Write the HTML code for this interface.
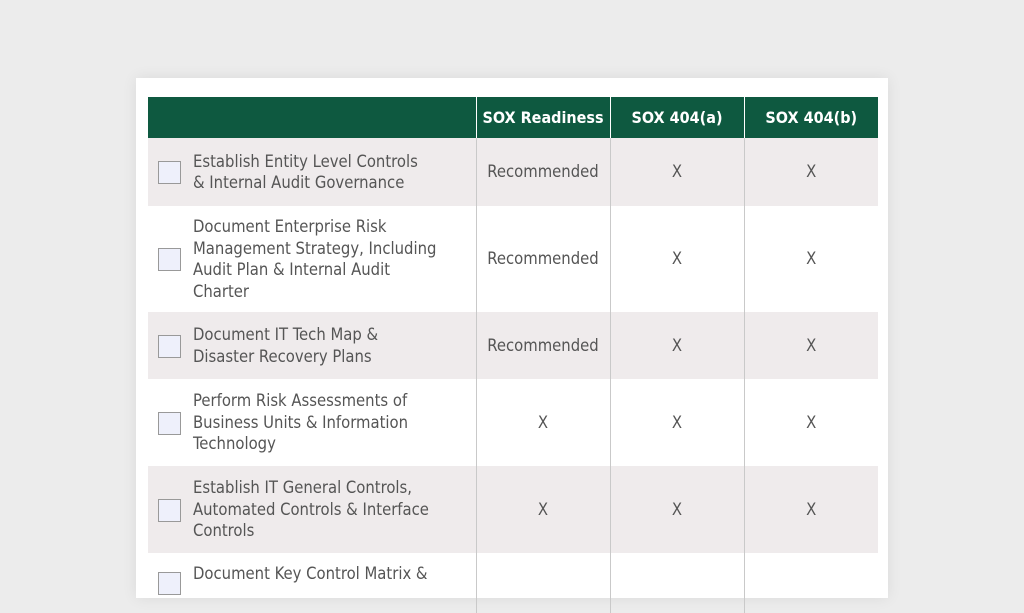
<!DOCTYPE html>
<html><head><style>
*{margin:0;padding:0;box-sizing:border-box}
body{width:1024px;height:574px;background:#ececec;overflow:hidden;position:relative;font-family:"DejaVu Sans","Liberation Sans",sans-serif}
.card{position:absolute;left:136px;top:78px;width:752px;height:520px;background:#fff;box-shadow:0 0 14px rgba(0,0,0,.08)}
table{position:absolute;left:12px;top:19px;border-collapse:collapse;width:730px;table-layout:fixed}
th{background:#0e5940;color:#fff;height:41px;font-size:16px;font-weight:bold;border-left:1px solid #fff;font-family:"DejaVu Sans Condensed","DejaVu Sans",sans-serif}
th:first-child{border-left:none}
td{color:#555;font-size:16.5px;line-height:21.5px;border-left:1px solid #c9c9c9;text-align:center;font-family:"DejaVu Sans Condensed","DejaVu Sans",sans-serif}
td:first-child{border-left:none;text-align:left;padding-left:45px;position:relative}
tr.s td{background:#efebec}
td:first-child::before{content:"";position:absolute;left:10px;top:50%;margin-top:-11px;width:21px;height:21px;border:1px solid #999;background:#eef0fb}
</style></head><body>
<div class="card">
<table>
<colgroup><col style="width:328px"><col style="width:134px"><col style="width:134px"><col style="width:134px"></colgroup>
<tr><th></th><th>SOX Readiness</th><th>SOX 404(a)</th><th>SOX 404(b)</th></tr>
<tr class="s" style="height:68px"><td>Establish Entity Level Controls<br>&amp; Internal Audit Governance</td><td>Recommended</td><td>X</td><td>X</td></tr>
<tr style="height:106px"><td>Document Enterprise Risk<br>Management Strategy, Including<br>Audit Plan &amp; Internal Audit<br>Charter</td><td>Recommended</td><td>X</td><td>X</td></tr>
<tr class="s" style="height:67px"><td>Document IT Tech Map &amp;<br>Disaster Recovery Plans</td><td>Recommended</td><td>X</td><td>X</td></tr>
<tr style="height:87px"><td>Perform Risk Assessments of<br>Business Units &amp; Information<br>Technology</td><td>X</td><td>X</td><td>X</td></tr>
<tr class="s" style="height:87px"><td>Establish IT General Controls,<br>Automated Controls &amp; Interface<br>Controls</td><td>X</td><td>X</td><td>X</td></tr>
<tr style="height:60px"><td style="vertical-align:top;padding-top:10px">Document Key Control Matrix &amp;<br>&nbsp;</td><td></td><td></td><td></td></tr>
</table>
</div>
</body></html>
